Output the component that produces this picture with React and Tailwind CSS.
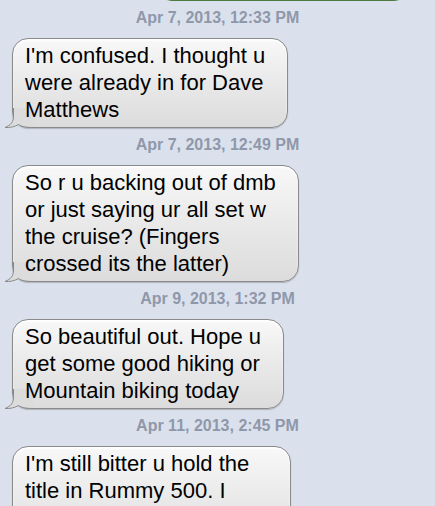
const messages = [
  {
    time: "Apr 7, 2013, 12:33 PM",
    lines: ["I'm confused. I thought u", "were already in for Dave", "Matthews"],
  },
  {
    time: "Apr 7, 2013, 12:49 PM",
    lines: [
      "So r u backing out of dmb",
      "or just saying ur all set w",
      "the cruise? (Fingers",
      "crossed its the latter)",
    ],
  },
  {
    time: "Apr 9, 2013, 1:32 PM",
    lines: ["So beautiful out. Hope u", "get some good hiking or", "Mountain biking today"],
  },
  {
    time: "Apr 11, 2013, 2:45 PM",
    lines: ["I'm still bitter u hold the", "title in Rummy 500. I"],
    // bubble runs past the bottom of the screen
    extra: "w-[279px] h-[110px]",
  },
];

function Tail() {
  return (
    <svg
      className="absolute left-[-9px] bottom-[-1px]"
      width="30"
      height="20"
      viewBox="0 0 30 20"
    >
      <path
        d="M9.5 0 L9.5 8 C9.5 14 7 17 1 19.5 C6 19.9 11 18.6 14.5 16.5 C17.5 18.6 21 19.5 30 19.5 L30 0 Z"
        fill="#dcdcdc"
      />
      <path
        d="M9.5 0 L9.5 8 C9.5 14 7 17 1 19.5 C6 19.9 11 18.6 14.5 16.5 C17.5 18.6 21 19.5 30 19.5"
        fill="none"
        stroke="#8a8a8a"
        strokeWidth="1"
      />
    </svg>
  );
}

function Bubble({ lines, extra = "w-fit" }) {
  return (
    <div
      className={`relative ml-[12px] mt-[11px] rounded-[16px] border border-[#8a8a8a] bg-gradient-to-b from-[#f8f8f8] via-[#e9e9e9] to-[#dcdcdc] pl-[12px] pr-[22px] pt-[3px] pb-[4px] shadow-[0_1px_1px_rgba(0,0,0,0.2),inset_0_2px_2px_rgba(255,255,255,0.9)] ${extra}`}
    >
      <Tail />
      <div className="relative text-[22px] leading-[27px] text-black whitespace-nowrap">
        {lines.map((l, i) => (
          <div key={i}>{l}</div>
        ))}
      </div>
    </div>
  );
}

export default function App() {
  return (
    <div className="w-[435px] h-[506px] overflow-hidden bg-[#dbe1ec] font-['Liberation_Sans',Arial,sans-serif]">
      {/* tail end of the sent message above */}
      <div className="ml-[156px] mt-[-39px] h-[40px] w-[254px] rounded-[16px] border border-[#4d7a43] bg-[#79b467]" />
      {messages.map((m, i) => (
        <div key={i}>
          <p className="mt-[8px] text-center text-[16px] leading-[18px] font-bold text-[#8f98aa]">
            {m.time}
          </p>
          <Bubble lines={m.lines} extra={m.extra} />
        </div>
      ))}
    </div>
  );
}
